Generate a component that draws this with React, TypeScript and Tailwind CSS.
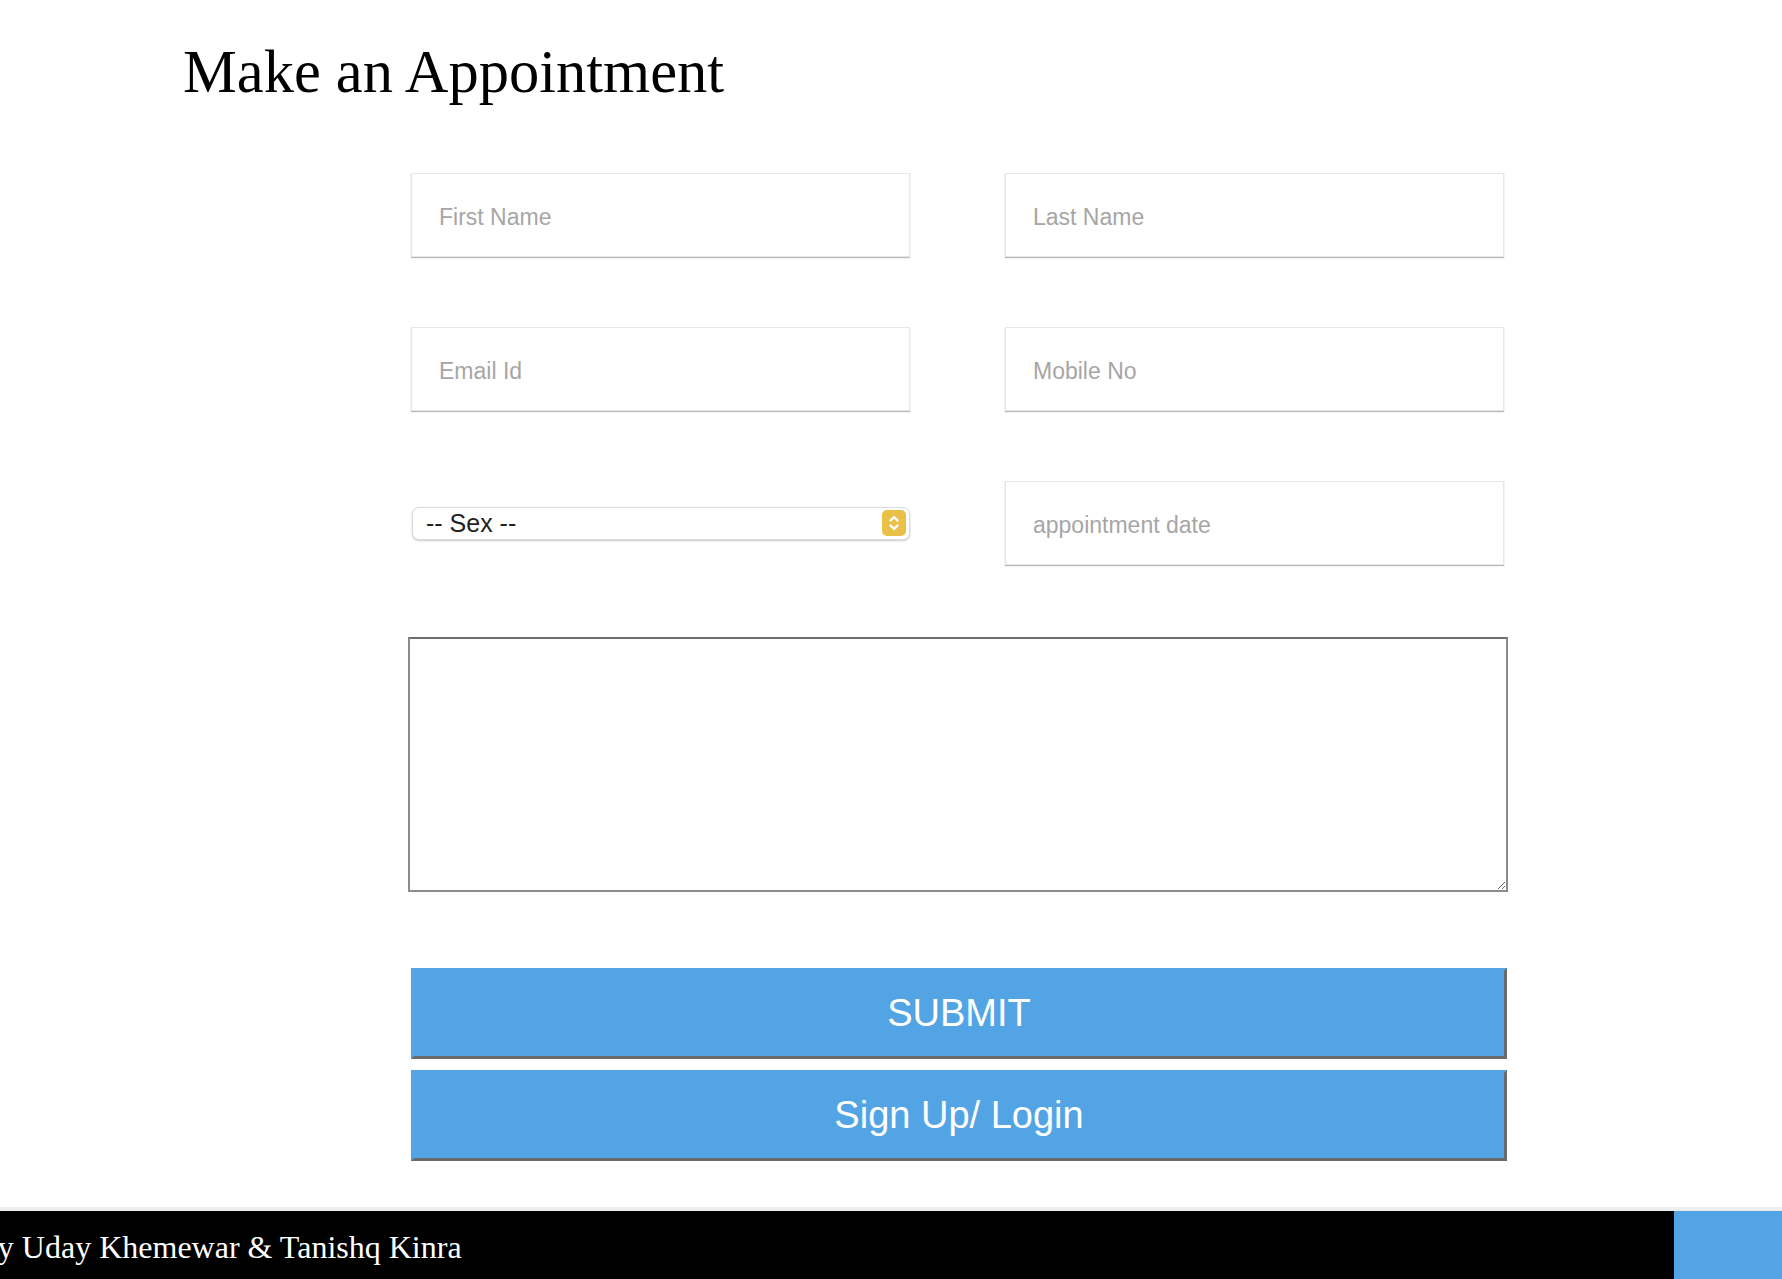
export default function App() {
  return (
    <div className="min-h-screen bg-white overflow-hidden">
      <h1 className="pl-[183px] pt-[42px] text-[60.5px] leading-[60px] font-normal text-black font-['Liberation_Serif','Times_New_Roman',serif]">
        Make an Appointment
      </h1>

      <form className="ml-[408px] w-[1100px] mt-[71px] font-['Liberation_Sans',Arial,sans-serif]" onSubmit={(e) => e.preventDefault()}>
        <div className="grid grid-cols-[499px_499px] gap-x-[95px] gap-y-[70px] pl-[3px]">
          <Field placeholder="First Name" />
          <Field placeholder="Last Name" />
          <Field placeholder="Email Id" />
          <Field placeholder="Mobile No" />
          <div className="flex items-center h-[84px]">
            <div className="relative w-[498px] ml-[1px]">
              <select defaultValue=""
                className="appearance-none w-full h-[33px] rounded-[7px] bg-white border border-[#dcdcdc] shadow-[0_1px_2px_rgba(0,0,0,0.22)] pl-[13px] text-[25px] leading-none text-[#222] outline-none">
                <option value="">-- Sex --</option>
                <option value="m">Male</option>
                <option value="f">Female</option>
              </select>
              {/* chevron badge */}
              <span className="pointer-events-none absolute right-[4px] top-[3px] w-[24px] h-[26px] rounded-[5px] bg-[#eac148] flex items-center justify-center">
                <svg width="12" height="18" viewBox="0 0 12 18" fill="none" stroke="white" strokeWidth="2.4" strokeLinecap="round" strokeLinejoin="round">
                  <path d="M2.5 6.5 L6 3 L9.5 6.5" />
                  <path d="M2.5 11.5 L6 15 L9.5 11.5" />
                </svg>
              </span>
            </div>
          </div>
          <Field placeholder="appointment date" />
        </div>

        <textarea className="block mt-[72px] w-[1100px] h-[255px] border-2 border-[#8c8c8c] border-t-[#6e6e6e] bg-white outline-none p-1" />

        <button type="submit"
          className="block mt-[76px] ml-[3px] w-[1096px] h-[91px] bg-[#53a4e4] text-white text-[38px] border-[3px] border-t-[#53a4e4] border-l-[#53a4e4] border-r-[#6a6a6a] border-b-[#6a6a6a]">
          SUBMIT
        </button>
        <button type="button"
          className="block mt-[11px] ml-[3px] w-[1096px] h-[91px] bg-[#53a4e4] text-white text-[38px] border-[3px] border-t-[#53a4e4] border-l-[#53a4e4] border-r-[#6a6a6a] border-b-[#6a6a6a]">
          Sign Up/ Login
        </button>
      </form>

      <footer className="mt-[46px] border-t-4 border-[#eeeeee] flex h-[72px]">
        <div className="flex-1 bg-black overflow-hidden">
          <p className="ml-[-99px] pt-[20px] whitespace-nowrap text-white text-[32px] leading-[32px] font-['Liberation_Serif','Times_New_Roman',serif]">
            Made by Uday Khemewar &amp; Tanishq Kinra
          </p>
        </div>
        <div className="w-[108px] bg-[#53a4e4]" />
      </footer>
    </div>
  )
}

function Field({ placeholder }: { placeholder: string }) {
  return (
    <input type="text" placeholder={placeholder}
      className="h-[84px] w-[499px] bg-white border border-[#e6e6e6] shadow-[0_1px_1px_rgba(0,0,0,0.28)] pl-[27px] pt-[5px] text-[23px] text-[#333] placeholder:text-[#a6a6a6] outline-none" />
  )
}
